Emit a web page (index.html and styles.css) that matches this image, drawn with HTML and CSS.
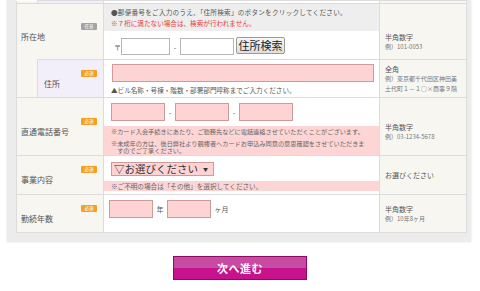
FILE: index.html
```html
<!DOCTYPE html>
<html lang="ja">
<head>
  <meta charset="UTF-8" />
  <meta name="viewport" content="width=device-width, initial-scale=1.0"/>
  <title>お申込みフォーム</title>
  <link rel="stylesheet" href="styles.css">
</head>
<body>
  <div class="form-box">
    <table class="form-table">
      <colgroup>
        <col class="c-side"><col class="c-label"><col class="c-field"><col class="c-note">
      </colgroup>

      <tr class="row-top">
        <td class="side"></td><td class="sub"></td><td></td><td class="note"></td>
      </tr>

      <!-- 所在地 -->
      <tr class="row-zip">
        <th colspan="2" class="label no-bottom">
          <div class="badge-line"><span class="badge optional">任意</span></div>
          所在地
        </th>
        <td class="field zip-field">
          <div class="info-box">
            <p class="lead">●郵便番号をご入力のうえ、「住所検索」のボタンをクリックしてください。</p>
            <p class="red">※７桁に満たない場合は、検索が行われません。</p>
          </div>
          <div class="zip-line">
            <span class="mark">〒</span>
            <input type="text" class="plain zip1">
            <span class="dash">-</span>
            <input type="text" class="plain zip2">
            <button type="button" class="search-btn">住所検索</button>
          </div>
        </td>
        <td class="note note-zip">半角数字<small>例）101-0053</small></td>
      </tr>

      <tr class="row-addr">
        <td class="side"></td>
        <th class="label sub">
          <div class="badge-line"><span class="badge required">必須</span></div>
          住所
        </th>
        <td class="field">
          <input type="text" class="pink addr">
          <p class="hint">▲ビル名称・号棟・階数・部署部門呼称までご入力ください。</p>
        </td>
        <td class="note">全角<small>例）東京都千代田区神田美<br>土代町１－１○×商事９階</small></td>
      </tr>

      <!-- 直通電話番号 -->
      <tr class="row-tel">
        <th colspan="2" class="label">
          <div class="badge-line"><span class="badge required">必須</span></div>
          直通電話番号
        </th>
        <td class="field">
          <div class="tel-line">
            <input type="text" class="pink tel">
            <span class="dash">-</span>
            <input type="text" class="pink tel">
            <span class="dash">-</span>
            <input type="text" class="pink tel">
          </div>
          <div class="warn-box">
            <p>※カード入会手続きにあたり、ご勤務先などに電話連絡させていただくことがございます。</p>
            <p>※未成年の方は、後日弊社より親権者へカードお申込み同意の意思確認をさせていただきま<br>すのでご了承ください。</p>
          </div>
        </td>
        <td class="note note-tel">半角数字<small>例）03-1234-5678</small></td>
      </tr>

      <!-- 事業内容 -->
      <tr class="row-biz">
        <th colspan="2" class="label">
          <div class="badge-line"><span class="badge required">必須</span></div>
          事業内容
        </th>
        <td class="field">
          <div class="select-wrap">
            <select class="pink biz">
              <option>▽お選びください</option>
              <option>製造業</option>
              <option>サービス業</option>
              <option>その他</option>
            </select>
          </div>
          <div class="warn-bar">※ご不明の場合は「その他」を選択してください。</div>
        </td>
        <td class="note">お選びください</td>
      </tr>

      <!-- 勤続年数 -->
      <tr class="row-year">
        <th colspan="2" class="label">
          <div class="badge-line"><span class="badge required">必須</span></div>
          勤続年数
        </th>
        <td class="field year-field">
          <div class="year-line">
            <input type="text" class="pink year">
            <span class="unit">年</span>
            <input type="text" class="pink year">
            <span class="unit">ヶ月</span>
          </div>
        </td>
        <td class="note">半角数字<small>例）10年8ヶ月</small></td>
      </tr>
    </table>
  </div>

  <div class="actions">
    <button type="button" class="next-btn">次へ進む</button>
  </div>
</body>
</html>
```

FILE: styles.css
```css
* {
  box-sizing: border-box;
}

body {
  margin: 0;
  background: #fff;
  font-family: "Noto Sans CJK JP", "Noto Sans", sans-serif;
  color: #555;
}

.form-box {
  width: 464px;
  margin-left: 7px;
  padding: 0 5px 9px 9px;
  background: #ececec;
  box-shadow: 0 0 2px rgba(0,0,0,0.12);
}

.form-table {
  width: 450px;
  table-layout: fixed;
  border-collapse: collapse;
  background: #fff;
}

.c-side { width: 21px; }
.c-label { width: 66px; }
.c-field { width: 276px; }
.c-note { width: 87px; }

.form-table th,
.form-table td {
  border: 1px solid #dcdcdc;
  padding: 0;
}

.side {
  background: #f7f6f1;
  border-top: none !important;
}

.sub {
  background: #f2eefa;
}

.label {
  background: #f7f6f1;
  font-weight: normal;
  font-size: 8px;
  line-height: 9px;
  text-align: left;
  vertical-align: middle;
  padding: 0 6px 0 4px !important;
  color: #555;
  white-space: nowrap;
}

.label.sub {
  background: #f2eefa;
  padding-left: 6px !important;
}

.label.no-bottom {
  border-bottom: none;
}

.badge-line {
  text-align: right;
  height: 7px;
  margin-bottom: 2px;
}

.badge {
  display: inline-block;
  width: 16px;
  height: 7px;
  border-radius: 1px;
  font-size: 4.5px;
  line-height: 7px;
  text-align: center;
  color: #fff;
  vertical-align: top;
}

.badge.optional { background: #a3a3a3; }
.badge.required { background: #f4a025; }

.row-top { height: 3px; }
.row-top td { padding: 0 !important; }
.row-zip { height: 56px; }
.row-addr { height: 38px; }
.row-tel { height: 58px; }
.row-biz { height: 39px; }
.row-year { height: 38px; }

.field {
  vertical-align: top;
  padding: 5px 7px 0 7px !important;
  font-size: 6.6px;
}

.zip-field {
  padding-top: 0 !important;
}

.note {
  background: #f7f6f1;
  vertical-align: middle;
  padding: 0 1px 0 5px !important;
  font-size: 7px;
  line-height: 10px;
  color: #555;
  white-space: nowrap;
}

.note small {
  display: block;
  font-size: 6px;
  line-height: 10px;
  color: #777;
}

.note-zip { padding-top: 20px !important; }
.note-tel { padding-top: 10px !important; }

p {
  margin: 0;
}

.info-box {
  height: 27px;
  overflow: hidden;
  margin: 0 -7px;
  padding: 2.5px 7px 0;
  background: #eeeeee;
  line-height: 11px;
  color: #555;
  white-space: nowrap;
}

.info-box p {
  height: 11px;
}

.lead {
  letter-spacing: 0.25px;
}

.red {
  color: #e83a3a;
}

.zip-line {
  display: flex;
  align-items: center;
  margin-top: 7px;
  height: 17px;
}

.mark {
  font-size: 7px;
  width: 10px;
  padding-left: 3px;
}

.dash {
  font-size: 7px;
  width: 10px;
  text-align: center;
}

input {
  height: 18px;
  margin: 0;
  padding: 0 2px;
  font-size: 9px;
  font-family: inherit;
}

.plain {
  height: 17px;
  border: 1px solid #b5b5b5;
  background: #fff;
}

.pink {
  border: 1px solid #cf9a9a;
  background: #fdd3d3;
}

.zip1 { width: 49px; }
.zip2 { width: 54px; margin-right: 2px; }

.search-btn {
  height: 17px;
  width: 49px;
  margin: -2px 0 0 0;
  padding: 0;
  font-size: 11px;
  line-height: 15px;
  font-family: inherit;
  color: #222;
  border: 1px solid #9a9a9a;
  border-radius: 2px;
  background: linear-gradient(#f6f6f6, #dedede);
}

.addr {
  display: block;
  width: 262px;
  margin-left: 1px;
  margin-top: -1px;
}

.hint {
  height: 10px;
  margin-top: 3px;
  line-height: 10px;
  color: #555;
  white-space: nowrap;
}

.tel-line {
  display: flex;
  align-items: center;
  height: 18px;
}

.tel {
  width: 54px;
}

.warn-box {
  height: 29px;
  overflow: hidden;
  margin: 5px -7px 0;
  padding: 1.5px 7px 0;
  background: #fdd5d5;
  font-size: 6.2px;
  color: #666;
  white-space: nowrap;
}

.warn-box p {
  height: 7.5px;
  line-height: 7.5px;
  padding-left: 1em;
  text-indent: -1em;
}

.warn-box p + p {
  height: 15px;
  margin-top: 4.5px;
}

.select-wrap {
  position: relative;
  width: 103px;
  height: 14px;
  margin-top: 1px;
}

.select-wrap::after {
  content: "▼";
  position: absolute;
  right: 6px;
  top: 4px;
  font-size: 5px;
  line-height: 6px;
  color: #333;
  pointer-events: none;
}

.biz {
  display: block;
  -webkit-appearance: none;
  appearance: none;
  width: 103px;
  height: 14px;
  margin: 0;
  padding: 0 2px;
  font-size: 10.5px;
  line-height: 12px;
  font-family: inherit;
  color: #333;
  border-radius: 0;
}

.warn-bar {
  margin: 5px -7px 0;
  padding: 0 7px;
  height: 10px;
  line-height: 10px;
  background: #fdd5d5;
  color: #666;
}

.year-field {
  padding-left: 5px !important;
}

.year-line {
  display: flex;
  align-items: center;
}

.year {
  width: 44px;
}

.unit {
  font-size: 7px;
  padding: 0 3.5px;
  white-space: nowrap;
}

.actions {
  text-align: center;
  margin-top: 12px;
}

.next-btn {
  width: 134px;
  height: 24px;
  border: 1px solid #8f0963;
  padding: 0;
  background: linear-gradient(#c74ba2 0, #c74ba2 50%, #c8118c 50%, #c8118c 100%);
  color: #fff;
  font-family: inherit;
  font-size: 11px;
  font-weight: bold;
  letter-spacing: 0.5px;
}
```
